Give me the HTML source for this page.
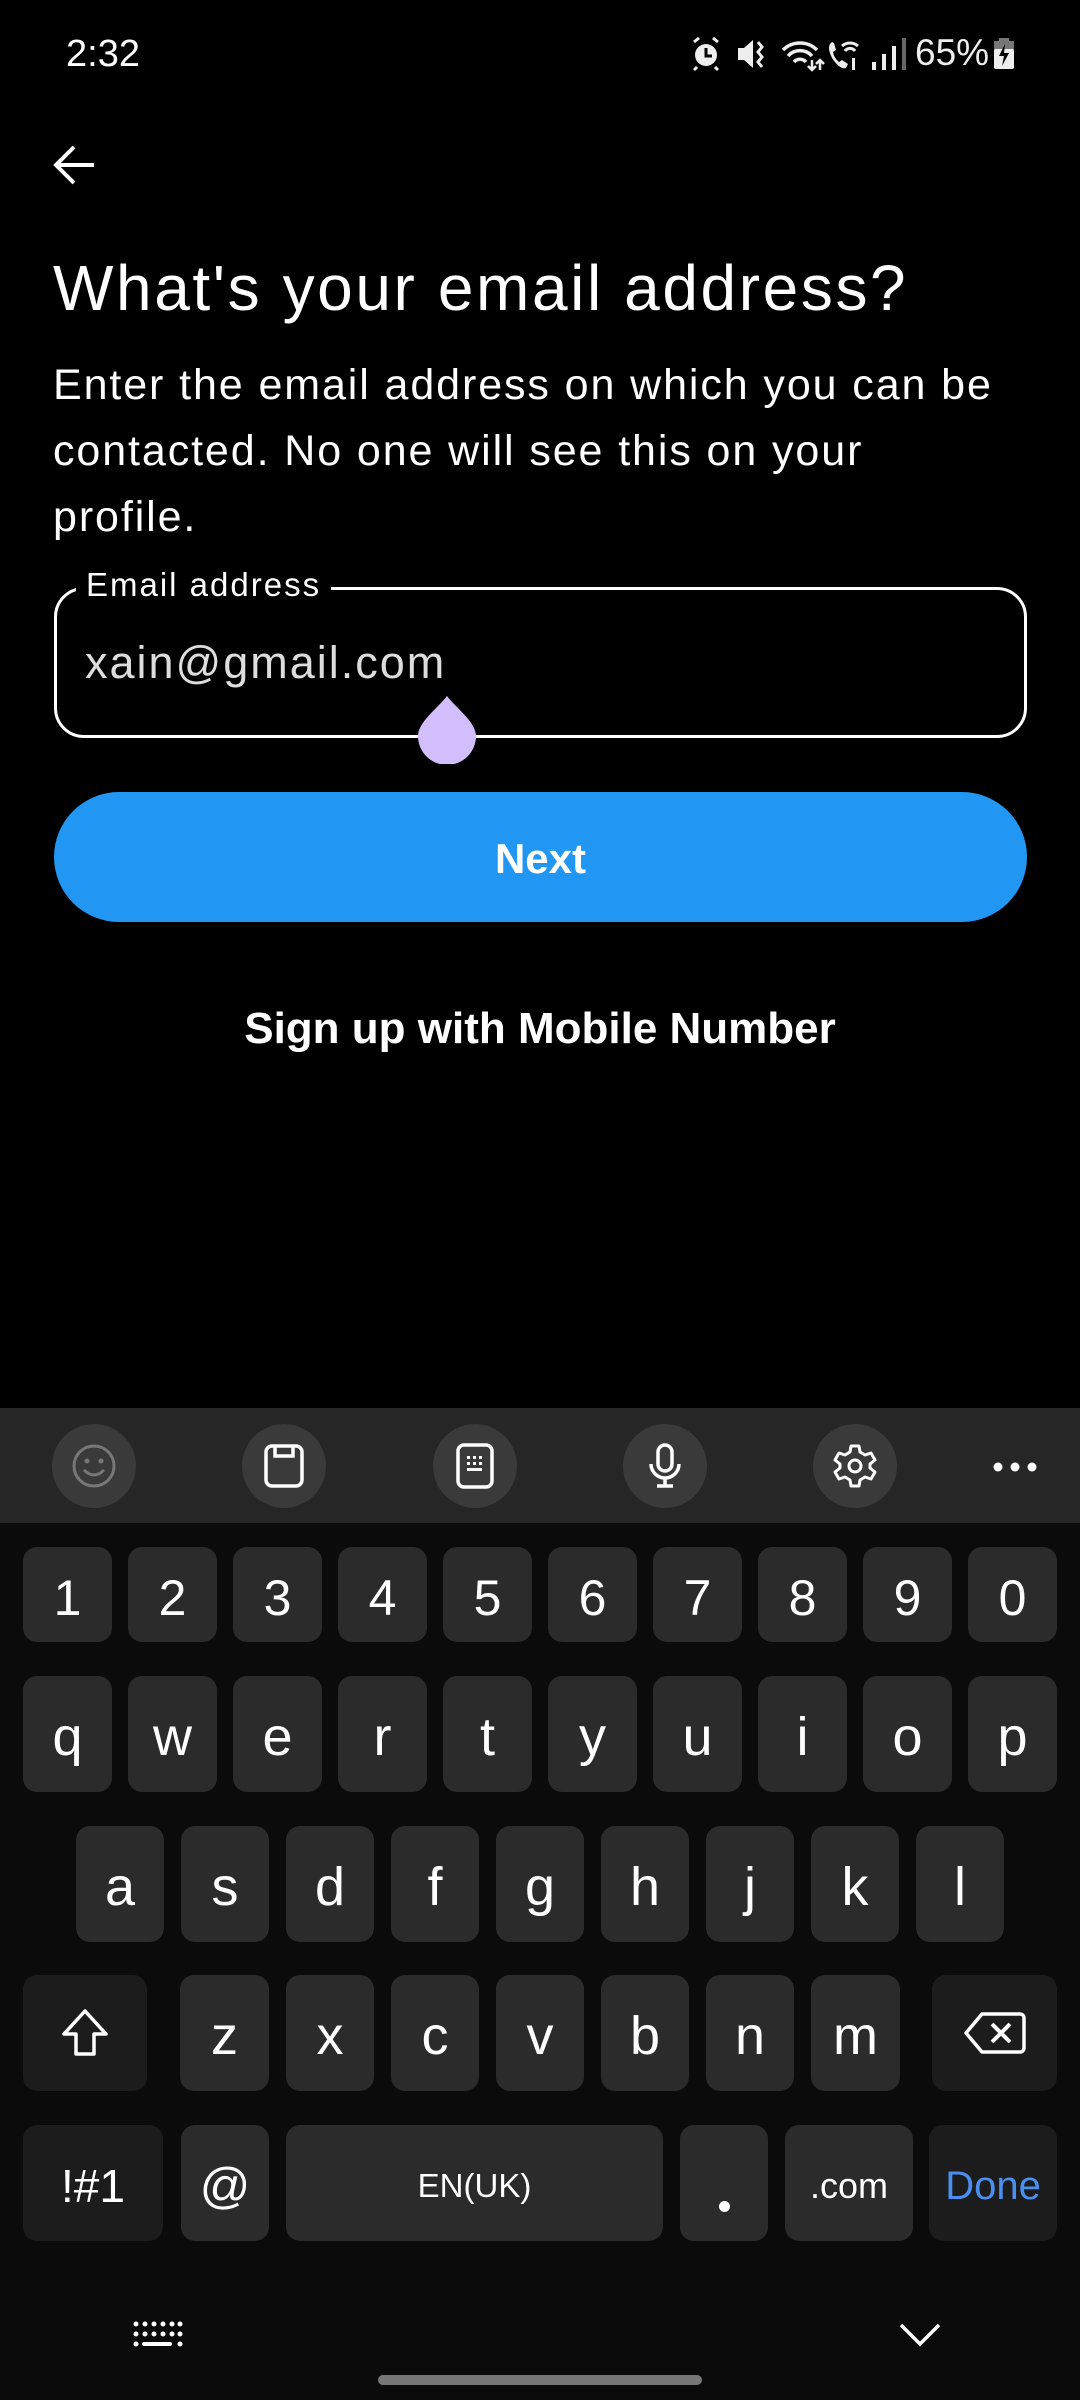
<!DOCTYPE html>
<html><head><meta charset="utf-8">
<style>
*{margin:0;padding:0;box-sizing:border-box}
body{width:1080px;height:2400px;background:#000;position:relative;overflow:hidden;font-family:"Liberation Sans",sans-serif;color:#fff}
.a{position:absolute}
.k{position:absolute;background:#2b2b2b;border-radius:14px;color:#fff;display:flex;align-items:center;justify-content:center;font-size:54px;padding-top:6px}
.kd{background:#1c1c1c}
.circ{position:absolute;width:84px;height:84px;border-radius:50%;background:#3a3a3a;top:1424px;display:flex;align-items:center;justify-content:center}
</style></head><body>
<!-- status bar -->
<div class="a" style="left:66px;top:33px;font-size:38px;color:#fff">2:32</div>
<svg class="a" style="left:690px;top:36px" width="330" height="36" viewBox="0 0 330 36">
 <g fill="#eee" stroke="#eee">
  <circle cx="16" cy="19" r="11" stroke-width="0"/>
  <path d="M16 12v8h6" stroke="#000" stroke-width="3" fill="none"/>
  <path d="M4 6l5-4M28 6l-5-4M7 31l-3 3M25 31l3 3" stroke-width="3" fill="none"/>
  <path d="M48 12h6l9-8v28l-9-8h-6z" stroke-width="0"/>
  <path d="M68 6l4 5-4 5 4 5-4 5 4 5" stroke-width="3" fill="none"/>
  <path d="M93 14a24 24 0 0 1 34 0M98 20a16 16 0 0 1 24 0M104 26a8 8 0 0 1 12 0" stroke-width="3.5" fill="none"/>
  <path d="M122 24v10M118 30l4 4 4-4M130 34v-10M126 28l4-4 4 4" stroke-width="2.5" fill="none"/>
  <path d="M142 6q-6 4 0 16 8 12 14 10l2-4-6-4-3 2q-5-4-6-10l3-2-2-7z" stroke-width="0"/>
  <path d="M152 10a12 12 0 0 1 16 0M155 15a6 6 0 0 1 10 0" stroke-width="3" fill="none"/>
  <rect x="162" y="22" width="3" height="12" stroke-width="0"/>
  <rect x="182" y="26" width="4" height="8" stroke-width="0"/>
  <rect x="192" y="18" width="4" height="16" stroke-width="0"/>
  <rect x="202" y="10" width="4" height="24" stroke-width="0"/>
  <rect x="212" y="2" width="4" height="32" stroke-width="0" fill="#666"/>
 </g>
</svg>
<div class="a" style="left:915px;top:32px;font-size:37px;color:#eee">65%</div>
<svg class="a" style="left:993px;top:38px" width="22" height="32" viewBox="0 0 22 32">
 <rect x="6" y="0" width="10" height="4" fill="#777"/>
 <rect x="1" y="3" width="20" height="9" fill="#777"/>
 <rect x="1" y="11" width="20" height="20" rx="2" fill="#eee"/>
 <path d="M12 6l-6 12h5l-2 10 7-13h-5z" fill="#000"/>
</svg>
<!-- back arrow -->
<svg class="a" style="left:50px;top:143px" width="48" height="44" viewBox="0 0 48 44">
 <path d="M44 22H6M24 4L6 22l18 18" stroke="#fff" stroke-width="4" fill="none"/>
</svg>
<div class="a" style="left:53px;top:251px;font-size:64px;letter-spacing:2.6px;white-space:nowrap">What's your email address?</div>
<div class="a" style="left:53px;top:352px;font-size:43px;letter-spacing:1.9px;line-height:66px;width:1000px">Enter the email address on which you can be<br>contacted. No one will see this on your<br>profile.</div>
<!-- input -->
<div class="a" style="left:54px;top:587px;width:973px;height:151px;border:3px solid #fff;border-radius:30px"></div>
<div class="a" style="left:76px;top:566px;background:#000;padding:0 10px;font-size:33px;letter-spacing:2px">Email address</div>
<div class="a" style="left:85px;top:637px;font-size:45px;letter-spacing:2px;color:#ddd">xain@gmail.com</div>
<svg class="a" style="left:418px;top:696px" width="58" height="68" viewBox="0 0 58 68">
 <path d="M29 0C20 12 0 26 0 40a29 29 0 0 0 58 0C58 26 38 12 29 0z" fill="#d2bdfd"/>
</svg>
<!-- button -->
<div class="a" style="left:54px;top:792px;width:973px;height:130px;background:#2196f2;border-radius:65px;display:flex;align-items:center;justify-content:center;font-size:42px;font-weight:bold;padding-top:4px">Next</div>
<div class="a" style="left:0;top:1004px;width:1080px;text-align:center;font-size:44px;font-weight:bold">Sign up with Mobile Number</div>
<!-- keyboard -->
<div class="a" style="left:0;top:1408px;width:1080px;height:992px;background:#0b0b0b"></div>
<div class="a" style="left:0;top:1408px;width:1080px;height:115px;background:#262626"></div>
<div class="circ" style="left:52px"><svg width="48" height="48" viewBox="0 0 48 48"><circle cx="24" cy="24" r="20" stroke="#777" stroke-width="3" fill="none"/><circle cx="17" cy="19" r="2.5" fill="#777"/><circle cx="31" cy="19" r="2.5" fill="#777"/><path d="M14 28q10 10 20 0" stroke="#777" stroke-width="3" fill="none"/></svg></div>
<div class="circ" style="left:242px"><svg width="44" height="48" viewBox="0 0 44 48"><rect x="4" y="4" width="36" height="40" rx="6" stroke="#fff" stroke-width="3.5" fill="none"/><path d="M13 4v10h18V4" stroke="#fff" stroke-width="3.5" fill="none"/></svg></div>
<div class="circ" style="left:433px"><svg width="44" height="48" viewBox="0 0 44 48"><rect x="5" y="3" width="34" height="42" rx="6" stroke="#fff" stroke-width="3.5" fill="none"/><g fill="#fff"><rect x="14" y="14" width="3" height="3"/><rect x="20" y="14" width="3" height="3"/><rect x="26" y="14" width="3" height="3"/><rect x="14" y="20" width="3" height="3"/><rect x="20" y="20" width="3" height="3"/><rect x="26" y="20" width="3" height="3"/><rect x="14" y="26" width="15" height="3"/></g></svg></div>
<div class="circ" style="left:623px"><svg width="40" height="48" viewBox="0 0 40 48"><rect x="13" y="3" width="14" height="26" rx="7" stroke="#fff" stroke-width="3.5" fill="none"/><path d="M6 22a14 14 0 0 0 28 0M20 36v8M12 44h16" stroke="#fff" stroke-width="3.5" fill="none"/></svg></div>
<div class="circ" style="left:813px"><svg width="48" height="48" viewBox="0 0 48 48"><path d="M20 4h8l1 6 5 3 6-2 4 7-5 4v4l5 4-4 7-6-2-5 3-1 6h-8l-1-6-5-3-6 2-4-7 5-4v-4l-5-4 4-7 6 2 5-3z" stroke="#fff" stroke-width="3" fill="none" stroke-linejoin="round"/><circle cx="24" cy="24" r="6" stroke="#fff" stroke-width="3" fill="none"/></svg></div>
<div class="a" style="left:993px;top:1459px;width:44px;height:10px"><svg width="44" height="10"><circle cx="5" cy="5" r="4.5" fill="#fff"/><circle cx="22" cy="5" r="4.5" fill="#fff"/><circle cx="39" cy="5" r="4.5" fill="#fff"/></svg></div>

<!-- number row -->
<div class="k" style="left:23px;top:1547px;width:89px;height:95px;font-size:50px">1</div>
<div class="k" style="left:128px;top:1547px;width:89px;height:95px;font-size:50px">2</div>
<div class="k" style="left:233px;top:1547px;width:89px;height:95px;font-size:50px">3</div>
<div class="k" style="left:338px;top:1547px;width:89px;height:95px;font-size:50px">4</div>
<div class="k" style="left:443px;top:1547px;width:89px;height:95px;font-size:50px">5</div>
<div class="k" style="left:548px;top:1547px;width:89px;height:95px;font-size:50px">6</div>
<div class="k" style="left:653px;top:1547px;width:89px;height:95px;font-size:50px">7</div>
<div class="k" style="left:758px;top:1547px;width:89px;height:95px;font-size:50px">8</div>
<div class="k" style="left:863px;top:1547px;width:89px;height:95px;font-size:50px">9</div>
<div class="k" style="left:968px;top:1547px;width:89px;height:95px;font-size:50px">0</div>
<!-- qwerty -->
<div class="k" style="left:23px;top:1676px;width:89px;height:116px">q</div>
<div class="k" style="left:128px;top:1676px;width:89px;height:116px">w</div>
<div class="k" style="left:233px;top:1676px;width:89px;height:116px">e</div>
<div class="k" style="left:338px;top:1676px;width:89px;height:116px">r</div>
<div class="k" style="left:443px;top:1676px;width:89px;height:116px">t</div>
<div class="k" style="left:548px;top:1676px;width:89px;height:116px">y</div>
<div class="k" style="left:653px;top:1676px;width:89px;height:116px">u</div>
<div class="k" style="left:758px;top:1676px;width:89px;height:116px">i</div>
<div class="k" style="left:863px;top:1676px;width:89px;height:116px">o</div>
<div class="k" style="left:968px;top:1676px;width:89px;height:116px">p</div>
<!-- asdf -->
<div class="k" style="left:76px;top:1826px;width:88px;height:116px">a</div>
<div class="k" style="left:181px;top:1826px;width:88px;height:116px">s</div>
<div class="k" style="left:286px;top:1826px;width:88px;height:116px">d</div>
<div class="k" style="left:391px;top:1826px;width:88px;height:116px">f</div>
<div class="k" style="left:496px;top:1826px;width:88px;height:116px">g</div>
<div class="k" style="left:601px;top:1826px;width:88px;height:116px">h</div>
<div class="k" style="left:706px;top:1826px;width:88px;height:116px">j</div>
<div class="k" style="left:811px;top:1826px;width:88px;height:116px">k</div>
<div class="k" style="left:916px;top:1826px;width:88px;height:116px">l</div>
<!-- zxcv -->
<div class="k kd" style="left:23px;top:1975px;width:124px;height:116px;padding:0"><svg width="50" height="52" viewBox="0 0 50 52"><path d="M25 4L4 27h12v20h18V27h12z" stroke="#fff" stroke-width="3.5" fill="none" stroke-linejoin="round"/></svg></div>
<div class="k" style="left:180px;top:1975px;width:89px;height:116px">z</div>
<div class="k" style="left:286px;top:1975px;width:88px;height:116px">x</div>
<div class="k" style="left:391px;top:1975px;width:88px;height:116px">c</div>
<div class="k" style="left:496px;top:1975px;width:88px;height:116px">v</div>
<div class="k" style="left:601px;top:1975px;width:88px;height:116px">b</div>
<div class="k" style="left:706px;top:1975px;width:88px;height:116px">n</div>
<div class="k" style="left:811px;top:1975px;width:89px;height:116px">m</div>
<div class="k kd" style="left:932px;top:1975px;width:125px;height:116px;padding:0"><svg width="62" height="46" viewBox="0 0 62 46"><path d="M18 4h38a4 4 0 0 1 4 4v30a4 4 0 0 1-4 4H18L2 23z" stroke="#fff" stroke-width="3.5" fill="none" stroke-linejoin="round"/><path d="M28 14l18 18M46 14L28 32" stroke="#fff" stroke-width="4"/></svg></div>
<!-- bottom row -->
<div class="k kd" style="left:23px;top:2125px;width:140px;height:116px;font-size:46px">!#1</div>
<div class="k" style="left:181px;top:2125px;width:88px;height:116px;font-size:50px">@</div>
<div class="k" style="left:286px;top:2125px;width:377px;height:116px;font-size:33px">EN(UK)</div>
<div class="k" style="left:680px;top:2125px;width:88px;height:116px"><div style="width:11px;height:11px;border-radius:50%;background:#fff;margin-top:40px"></div></div>
<div class="k" style="left:785px;top:2125px;width:128px;height:116px;font-size:36px">.com</div>
<div class="k kd" style="left:929px;top:2125px;width:128px;height:116px;font-size:40px;color:#4a8ef0">Done</div>
<!-- nav -->
<svg class="a" style="left:133px;top:2321px" width="50" height="28" viewBox="0 0 50 28"><g fill="#fff"><circle cx="3" cy="3" r="2.5"/><circle cx="12" cy="3" r="2.5"/><circle cx="21" cy="3" r="2.5"/><circle cx="30" cy="3" r="2.5"/><circle cx="39" cy="3" r="2.5"/><circle cx="47" cy="3" r="2.5"/><circle cx="3" cy="13" r="2.5"/><circle cx="12" cy="13" r="2.5"/><circle cx="21" cy="13" r="2.5"/><circle cx="30" cy="13" r="2.5"/><circle cx="39" cy="13" r="2.5"/><circle cx="47" cy="13" r="2.5"/><circle cx="3" cy="23" r="2.5"/><rect x="9" y="21" width="30" height="4" rx="2"/><circle cx="47" cy="23" r="2.5"/></g></svg>
<svg class="a" style="left:898px;top:2322px" width="44" height="26" viewBox="0 0 44 26"><path d="M3 3l19 19L41 3" stroke="#fff" stroke-width="3.5" fill="none"/></svg>
<div class="a" style="left:378px;top:2375px;width:324px;height:10px;border-radius:5px;background:#777"></div>
</body></html>
